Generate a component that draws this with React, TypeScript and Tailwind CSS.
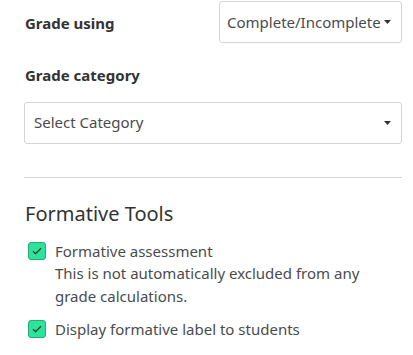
const font = { fontFamily: '"Noto Sans", "Open Sans", sans-serif' };

function Caret() {
  return (
    <svg width="7" height="4" viewBox="0 0 7 4" className="shrink-0">
      <path d="M0 0h7L3.5 4z" fill="#333" />
    </svg>
  );
}

function Check() {
  return (
    <span className="mt-[2px] flex h-[18px] w-[18px] shrink-0 items-center justify-center rounded-[3px] border border-[#1fae73] bg-[#2ee29a]">
      <svg width="10" height="8" viewBox="0 0 10 8">
        <path d="M1 4.2l2.6 2.5L9 1.2" fill="none" stroke="#1e3a2c" strokeWidth="1.3" />
      </svg>
    </span>
  );
}

export default function App() {
  return (
    <div className="w-[413px] bg-white pl-[24px] pr-[11px] text-[#494c4e]" style={font}>
      <div className="flex h-[43px] items-center justify-between pt-[1px]">
        <span className="pl-[1px] pt-[2px] text-[15px] font-bold text-[#333]">Grade using</span>
        <div className="flex h-[42px] w-[183px] items-center justify-between rounded-[3px] border border-[#d3d5d6] pl-[7px] pr-[10px] text-[15px]">
          <span>Complete/Incomplete</span>
          <Caret />
        </div>
      </div>
      <div className="mt-[21px] pl-[1px] text-[15px] font-bold text-[#333]">Grade category</div>
      <div className="mt-[15px] flex h-[42px] items-center justify-between rounded-[3px] border border-[#d3d5d6] pl-[9px] pr-[10px] text-[15px]">
        <span>Select Category</span>
        <Caret />
      </div>
      <div className="mt-[33px] border-t border-[#d3d5d6]" />
      <h2 className="mt-[23px] pl-[1px] text-[20px] font-normal leading-[26px] text-[#333]">Formative Tools</h2>
      <div className="mt-[13px] flex flex-col gap-[11px] pl-[4px]">
        <label className="flex gap-[9px] text-[15px] leading-[22.5px]">
          <Check />
          <span>
            Formative assessment
            <br />
            This is not automatically excluded from any grade calculations.
          </span>
        </label>
        <label className="flex gap-[9px] text-[15px] leading-[22px]">
          <Check />
          <span>Display formative label to students</span>
        </label>
      </div>
    </div>
  );
}
